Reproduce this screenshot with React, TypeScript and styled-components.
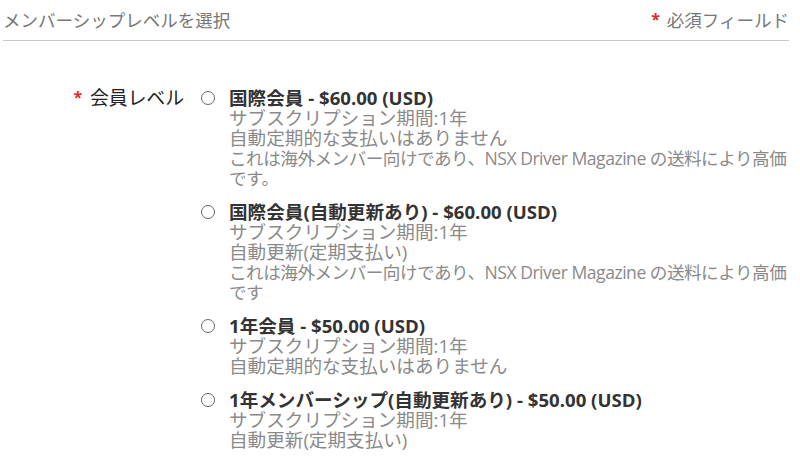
import React from "react";
import styled, { createGlobalStyle } from "styled-components";

const Global = createGlobalStyle`
  html, body { margin: 0; padding: 0; background: #fff; }
  body {
    font-family: "Open Sans", "Noto Sans CJK JP", sans-serif;
    font-size: 17px;
    color: #222;
  }
`;

const Page = styled.div`
  width: 800px;
  padding: 0 11px 0 3px;
  box-sizing: border-box;
`;

const Header = styled.div`
  display: flex;
  justify-content: space-between;
  align-items: center;
  height: 41px;
  border-bottom: 1px solid #c8c8c8;
  color: #777;
  font-size: 17.5px;
  line-height: 20px;
  box-sizing: border-box;
`;

const Req = styled.span<{ $gap?: number }>`
  color: #e02b27;
  font-weight: 700;
  font-size: 16px;
  margin-right: ${(p) => p.$gap ?? 6}px;
  position: relative;
  top: -2px;
`;

const FormRow = styled.div`
  display: grid;
  grid-template-columns: 186px 1fr;
  margin-top: 47px;
`;

const Label = styled.div`
  text-align: right;
  padding-right: 5px;
  font-size: 18.8px;
  line-height: 20px;
  height: 20px;
  white-space: nowrap;
  color: #222;
`;

const Options = styled.div`
  display: flex;
  flex-direction: column;
  gap: 14px;
`;

const Option = styled.label`
  display: grid;
  grid-template-columns: 14px 1fr;
  column-gap: 14px;
  padding-left: 12px;
`;

const Radio = styled.span`
  width: 14px;
  height: 14px;
  border: 1px solid #666;
  border-radius: 50%;
  margin-top: 3px;
  box-sizing: border-box;
  background: #fff;
`;

const Body = styled.div`
  display: flex;
  flex-direction: column;
`;

const Line = styled.div`
  height: 20px;
  line-height: 20px;
  white-space: nowrap;
  font-size: 18.6px;
`;

const Title = styled(Line)`
  font-weight: 700;
  color: #333;
`;

const Desc = styled(Line)<{ $compact?: boolean }>`
  color: #8a8a8a;
  font-size: ${(p) => (p.$compact ? "17.6px" : "18.6px")};
  letter-spacing: ${(p) => (p.$compact ? "-0.5px" : "0")};
`;

type Opt = { title: string; lines: string[]; compact?: string[] };

const options: Opt[] = [
  {
    title: "国際会員 - $60.00 (USD)",
    lines: ["サブスクリプション期間:1年", "自動定期的な支払いはありません"],
    compact: [
      "これは海外メンバー向けであり、NSX Driver Magazine の送料により高価",
      "です。",
    ],
  },
  {
    title: "国際会員(自動更新あり) - $60.00 (USD)",
    lines: ["サブスクリプション期間:1年", "自動更新(定期支払い)"],
    compact: [
      "これは海外メンバー向けであり、NSX Driver Magazine の送料により高価",
      "です",
    ],
  },
  {
    title: "1年会員 - $50.00 (USD)",
    lines: ["サブスクリプション期間:1年", "自動定期的な支払いはありません"],
  },
  {
    title: "1年メンバーシップ(自動更新あり) - $50.00 (USD)",
    lines: ["サブスクリプション期間:1年", "自動更新(定期支払い)"],
  },
];

export default function App() {
  return (
    <Page>
      <Global />
      <Header>
        <span>メンバーシップレベルを選択</span>
        <span>
          <Req $gap={7}>*</Req>必須フィールド
        </span>
      </Header>
      <FormRow>
        <Label>
          <Req $gap={8}>*</Req>会員レベル
        </Label>
        <Options>
          {options.map((o) => (
            <Option key={o.title}>
              <Radio />
              <Body>
                <Title>{o.title}</Title>
                {o.lines.map((l) => (
                  <Desc key={l}>{l}</Desc>
                ))}
                {(o.compact ?? []).map((l) => (
                  <Desc key={l} $compact>
                    {l}
                  </Desc>
                ))}
              </Body>
            </Option>
          ))}
        </Options>
      </FormRow>
    </Page>
  );
}
